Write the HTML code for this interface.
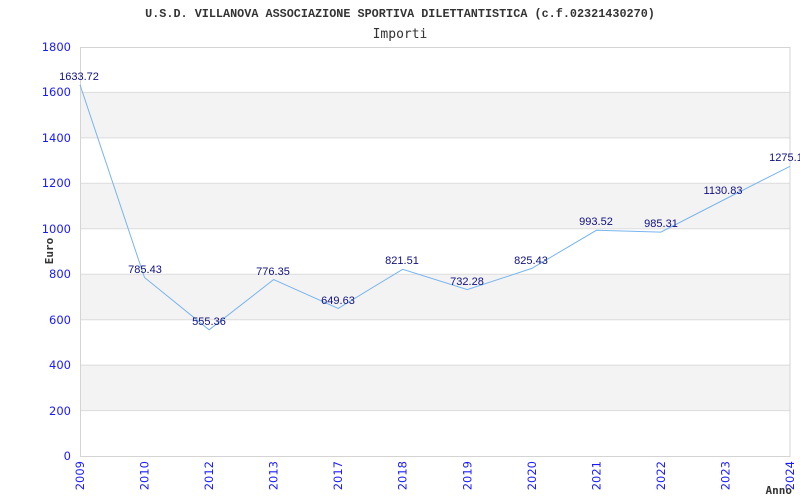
<!DOCTYPE html>
<html><head><meta charset="utf-8"><style>
html,body{margin:0;padding:0;background:#fff;width:800px;height:500px;overflow:hidden}
</style></head><body>
<svg width="800" height="500" xmlns="http://www.w3.org/2000/svg" style="display:block">
<rect width="800" height="500" fill="#fff"/>
<text x="400" y="17" text-anchor="middle" font-family="Liberation Mono, monospace" font-size="11.8" font-weight="bold" fill="#333">U.S.D. VILLANOVA ASSOCIAZIONE SPORTIVA DILETTANTISTICA (c.f.02321430270)</text>
<text x="400" y="38" text-anchor="middle" font-family="DejaVu Sans Mono, monospace" font-size="13" fill="#333">Importi</text>
<g fill="#f3f3f3">
<rect x="80" y="92.4" width="710" height="45.4"/>
<rect x="80" y="183.3" width="710" height="45.4"/>
<rect x="80" y="274.2" width="710" height="45.4"/>
<rect x="80" y="365.1" width="710" height="45.4"/>
</g>
<g stroke="#dcdcdc" stroke-width="1">
<line x1="80" x2="790" y1="92.4" y2="92.4"/>
<line x1="80" x2="790" y1="137.9" y2="137.9"/>
<line x1="80" x2="790" y1="183.3" y2="183.3"/>
<line x1="80" x2="790" y1="228.8" y2="228.8"/>
<line x1="80" x2="790" y1="274.2" y2="274.2"/>
<line x1="80" x2="790" y1="319.7" y2="319.7"/>
<line x1="80" x2="790" y1="365.1" y2="365.1"/>
<line x1="80" x2="790" y1="410.6" y2="410.6"/>
</g>
<rect x="80.5" y="47.5" width="709.5" height="409" fill="none" stroke="#d4d4d4"/>
<g font-family="DejaVu Sans, sans-serif" font-size="11.5" fill="#1a1aff" text-anchor="end">
<text x="71" y="51">1800</text><text x="71" y="96">1600</text><text x="71" y="142">1400</text>
<text x="71" y="187">1200</text><text x="71" y="233">1000</text><text x="71" y="278">800</text>
<text x="71" y="324">600</text><text x="71" y="369">400</text><text x="71" y="415">200</text>
<text x="71" y="460">0</text>
</g>
<text transform="translate(53,251) rotate(-90)" text-anchor="middle" font-family="DejaVu Sans Mono, monospace" font-size="11" font-weight="bold" fill="#333">Euro</text>
<polyline fill="none" stroke="#78b4f0" stroke-width="1" points="80,84.8 144.5,277.5 209.1,329.8 273.6,279.6 338.2,308.4 402.7,269.3 467.3,289.6 531.8,268.4 596.4,230.3 660.9,232.1 725.5,199 790,166.3"/>
<g font-family="Liberation Sans, sans-serif" font-size="11" fill="#101080" text-anchor="middle">
<text x="79" y="80">1633.72</text><text x="145" y="273">785.43</text><text x="209" y="325">555.36</text>
<text x="273" y="275">776.35</text><text x="338" y="304">649.63</text><text x="402" y="264">821.51</text>
<text x="467" y="285">732.28</text><text x="531" y="264">825.43</text><text x="596" y="225">993.52</text>
<text x="661" y="227">985.31</text><text x="723" y="194">1130.83</text><text x="786" y="161">1275.1</text>
</g>
<text x="792" y="494" text-anchor="end" font-family="DejaVu Sans Mono, monospace" font-size="11" font-weight="bold" fill="#333">Anno</text>
<g font-family="DejaVu Sans, sans-serif" font-size="11.5" fill="#1a1aff" text-anchor="end">
<text transform="translate(84,461) rotate(-90)">2009</text>
<text transform="translate(148.5,461) rotate(-90)">2010</text>
<text transform="translate(213.1,461) rotate(-90)">2012</text>
<text transform="translate(277.6,461) rotate(-90)">2013</text>
<text transform="translate(342.2,461) rotate(-90)">2017</text>
<text transform="translate(406.7,461) rotate(-90)">2018</text>
<text transform="translate(471.3,461) rotate(-90)">2019</text>
<text transform="translate(535.8,461) rotate(-90)">2020</text>
<text transform="translate(600.4,461) rotate(-90)">2021</text>
<text transform="translate(664.9,461) rotate(-90)">2022</text>
<text transform="translate(729.5,461) rotate(-90)">2023</text>
<text transform="translate(794,461) rotate(-90)">2024</text>
</g>
</svg>
</body></html>
